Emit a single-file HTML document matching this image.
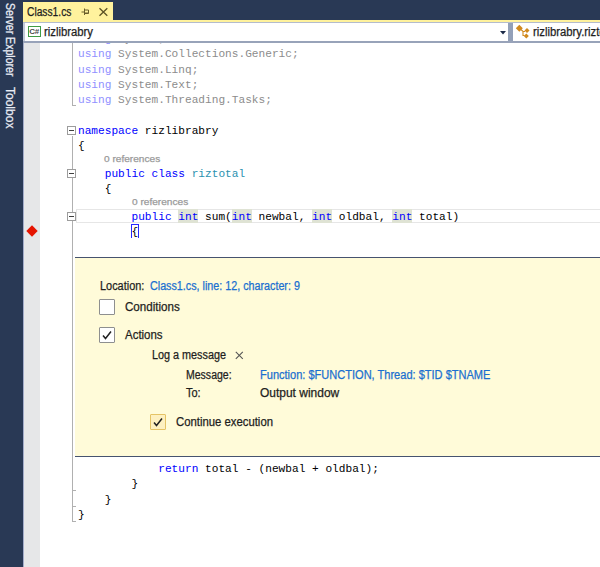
<!DOCTYPE html>
<html><head><meta charset="utf-8">
<style>
html,body{margin:0;padding:0;}
body{width:600px;height:567px;overflow:hidden;background:#fff;position:relative;font-family:"Liberation Sans",sans-serif;}
.a{position:absolute;}
.u{position:absolute;white-space:nowrap;line-height:1;transform-origin:0 0;-webkit-text-stroke:0.25px currentColor;}
.c{position:absolute;left:78px;font-family:"Liberation Mono",monospace;font-size:11.15px;white-space:pre;color:#000;line-height:16px;height:16px;}
.k{color:#0000ff;}
.t{color:#2b91af;}
.fk{color:#9090ff;}
.fg{color:#8c8c8c;}
.hl{background:#dfe3d4;padding:2px 0 0.5px;}
.ob{position:absolute;width:7px;height:7px;border:1px solid #9c9c9c;background:#fff;}
.ob i{position:absolute;left:1px;top:3px;width:5px;height:1px;background:#404040;}
.ln{position:absolute;background:#b0b0b0;}
</style></head><body>

<div class="a" style="left:76px;top:209px;width:530px;height:14px;border:1px solid #e6e6e6;box-sizing:border-box;"></div>
<div class="c" style="top:30.73px"><span class="fk">using</span><span class="fg"> System;</span></div>
<div class="c" style="top:46.13px"><span class="fk">using</span><span class="fg"> System.Collections.Generic;</span></div>
<div class="c" style="top:61.53px"><span class="fk">using</span><span class="fg"> System.Linq;</span></div>
<div class="c" style="top:76.83px"><span class="fk">using</span><span class="fg"> System.Text;</span></div>
<div class="c" style="top:92.23px"><span class="fk">using</span><span class="fg"> System.Threading.Tasks;</span></div>
<div class="c" style="top:122.93px"><span class="k">namespace</span> rizlibrabry</div>
<div class="c" style="top:138.33px">{</div>
<div class="c" style="top:165.63px">    <span class="k">public</span> <span class="k">class</span> <span class="t">riztotal</span></div>
<div class="c" style="top:181.03px">    {</div>
<div class="c" style="top:208.63px">        <span class="k">public</span> <span class="k hl">int</span> sum(<span class="k hl">int</span> newbal, <span class="k hl">int</span> oldbal, <span class="k hl">int</span> total)</div>
<div class="c" style="top:224.03px">        <span class="br">{</span></div>
<div class="c" style="top:461.03px">            <span class="k">return</span> total - (newbal + oldbal);</div>
<div class="c" style="top:476.43px">        }</div>
<div class="c" style="top:491.73px">    }</div>
<div class="c" style="top:507.13px">}</div>
<div class="a" style="left:131px;top:224px;width:8px;height:14px;border:1px solid #2828ff;border-bottom:none;box-sizing:border-box;"></div>
<div class="ln" style="left:72px;top:43px;width:1px;height:63px;"></div>
<div class="ln" style="left:72px;top:105px;width:4px;height:1px;"></div>
<div class="ln" style="left:72px;top:136px;width:1px;height:386px;"></div>
<div class="ln" style="left:72px;top:490px;width:4px;height:1px;"></div>
<div class="ln" style="left:72px;top:506px;width:4px;height:1px;"></div>
<div class="ln" style="left:72px;top:521px;width:4px;height:1px;"></div>
<div class="ob" style="left:67px;top:126px;"><i></i></div>
<div class="ob" style="left:67px;top:169px;"><i></i></div>
<div class="ob" style="left:67px;top:212px;"><i></i></div>
<div class="a" style="left:0;top:0;width:600px;height:20px;background:#293955;"></div>
<div class="a" style="left:0;top:0;width:23px;height:567px;background:#293955;"></div>
<div class="a" style="left:23px;top:2px;width:90px;height:20px;background:#fff29d;"></div>
<div class="a" style="left:23px;top:20px;width:577px;height:2px;background:#fff29d;"></div>
<div class="a" style="left:23px;top:22px;width:577px;height:21px;background:#98a3b9;"></div>
<div class="a" style="left:23px;top:22px;width:577px;height:1px;background:#b4bccd;"></div>
<div class="a" style="left:23px;top:23px;width:2px;height:18px;background:#c3cad8;"></div>
<div class="a" style="left:508px;top:23px;width:5px;height:18px;background:#93a0b8;"></div>
<div class="a" style="left:25px;top:23px;width:483px;height:18px;background:#fff;"></div>
<div class="a" style="left:513px;top:23px;width:90px;height:18px;background:#fff;"></div>
<div class="a" style="left:23px;top:43px;width:17px;height:524px;background:#e6e7e8;"></div>
<div class="a" style="left:23px;top:43px;width:1px;height:524px;background:#a3acc9;"></div>
<svg class="a" style="left:80px;top:6px" width="12" height="12" viewBox="0 0 12 12"><path d="M1.5 6H4 M4.5 2.5V9 M5 4H8.5V7.5H5 M5 7H8.5" stroke="#6a5f2a" stroke-width="1" fill="none"/></svg>
<svg class="a" style="left:98px;top:7px" width="11" height="10" viewBox="0 0 11 10"><path d="M1.5 1.2L9.3 8.8M9.3 1.2L1.5 8.8" stroke="#5e5426" stroke-width="1.3" fill="none"/></svg>
<div class="a" style="left:28px;top:26px;width:13px;height:11px;border:1px solid #3f9b45;box-sizing:border-box;background:#fff;"></div>
<div class="a" style="left:29.3px;top:27.5px;font-size:8px;line-height:8px;font-weight:bold;color:#4a4a4a;letter-spacing:-0.2px;">C#</div>
<svg class="a" style="left:500px;top:31px" width="6" height="4" viewBox="0 0 6 4"><path d="M0 0H6L3 3.5Z" fill="#1b2a47"/></svg>
<svg class="a" style="left:514px;top:24px" width="16" height="16" viewBox="0 0 16 16"><g fill="#d18a1f"><path d="M5.3 0.8L8.8 4.3L5.3 7.8L1.8 4.3Z"/><path d="M13 4L15.5 6.5L13 9L10.5 6.5Z"/><path d="M12.3 9.5L14.8 12L12.3 14.5L9.8 12Z"/></g><path d="M7 5.5L9 7.5H11M9 7.5V11.5H10.5" stroke="#d18a1f" stroke-width="1.1" fill="none"/></svg>
<svg class="a" style="left:26px;top:225px" width="12" height="12" viewBox="0 0 12 12"><path d="M6 0.3L11.7 6L6 11.7L0.3 6Z" fill="#e51400"/></svg>
<div class="a" style="left:75px;top:257px;width:525px;height:200px;background:#fffbd9;border-top:1px solid #46536f;border-bottom:1px solid #46536f;box-sizing:border-box;"></div>
<div class="a" style="left:99px;top:299px;width:16px;height:16px;border:1px solid #8e8f8f;border-radius:1px;background:#fff;box-sizing:border-box;"></div>
<div class="a" style="left:99px;top:327px;width:16px;height:16px;border:1px solid #8e8f8f;border-radius:1px;background:#fff;box-sizing:border-box;"></div>
<svg class="a" style="left:99px;top:327px" width="16" height="16" viewBox="0 0 16 16"><path d="M4 8.5L6.5 11.5L12 4.5" stroke="#222" stroke-width="1.5" fill="none"/></svg>
<div class="a" style="left:150px;top:414px;width:16px;height:16px;border:1px solid #e5c365;border-radius:1px;background:#fdf0c0;box-sizing:border-box;"></div>
<svg class="a" style="left:150px;top:414px" width="16" height="16" viewBox="0 0 16 16"><path d="M4 8.5L6.5 11.5L12 4.5" stroke="#222" stroke-width="1.5" fill="none"/></svg>
<svg class="a" style="left:235px;top:351px" width="9" height="9" viewBox="0 0 9 9"><path d="M0.8 0.8L7.8 7.8M7.8 0.8L0.8 7.8" stroke="#555" stroke-width="1.1" fill="none"/></svg>
<div id="tabt" class="u" style="left:26.80px;top:5.74px;font-size:12px;color:#1e1e1e;transform:scaleX(0.8536);">Class1.cs</div>
<div id="nav1" class="u" style="left:44.00px;top:25.54px;font-size:12px;color:#1e1e1e;transform:scaleX(0.9420);">rizlibrabry</div>
<div id="nav2" class="u" style="left:532.50px;top:25.54px;font-size:12px;color:#1e1e1e;transform:scaleX(0.9420);">rizlibrabry.riztotal</div>
<div id="loc" class="u" style="left:100.00px;top:279.84px;font-size:12px;color:#1e1e1e;transform:scaleX(0.9096);">Location:</div>
<div id="locl" class="u" style="left:149.80px;top:279.84px;font-size:12px;color:#1a6fd0;transform:scaleX(0.8953);">Class1.cs, line: 12, character: 9</div>
<div id="cond" class="u" style="left:125.00px;top:300.64px;font-size:12px;color:#1e1e1e;transform:scaleX(0.9664);">Conditions</div>
<div id="act" class="u" style="left:125.00px;top:328.54px;font-size:12px;color:#1e1e1e;transform:scaleX(0.9553);">Actions</div>
<div id="log" class="u" style="left:151.60px;top:348.84px;font-size:12px;color:#1e1e1e;transform:scaleX(0.9018);">Log a message</div>
<div id="msg" class="u" style="left:186.40px;top:368.64px;font-size:12px;color:#1e1e1e;transform:scaleX(0.8764);">Message:</div>
<div id="msgl" class="u" style="left:260.40px;top:368.64px;font-size:12px;color:#1a6fd0;transform:scaleX(0.9197);">Function: $FUNCTION, Thread: $TID $TNAME</div>
<div id="to" class="u" style="left:186.40px;top:386.64px;font-size:12px;color:#1e1e1e;transform:scaleX(0.9116);">To:</div>
<div id="out" class="u" style="left:260.40px;top:386.64px;font-size:12px;color:#1e1e1e;transform:scaleX(0.9976);">Output window</div>
<div id="cont" class="u" style="left:176.00px;top:415.84px;font-size:12px;color:#1e1e1e;transform:scaleX(0.9440);">Continue execution</div>
<div id="lens1" class="u" style="left:104.30px;top:155.38px;font-size:9px;color:#9a9a9a;transform:scaleX(1.1233);">0 references</div>
<div id="lens2" class="u" style="left:131.50px;top:198.48px;font-size:9px;color:#9a9a9a;transform:scaleX(1.1233);">0 references</div>
<div id="vt1" class="u" style="left:16.16px;top:2.50px;font-size:12px;color:#e8ecf4;transform:rotate(90deg) scaleX(0.8816);">Server Explorer</div>
<div id="vt2" class="u" style="left:16.16px;top:87.00px;font-size:12px;color:#e8ecf4;transform:rotate(90deg) scaleX(1.0006);">Toolbox</div>
</body></html>
